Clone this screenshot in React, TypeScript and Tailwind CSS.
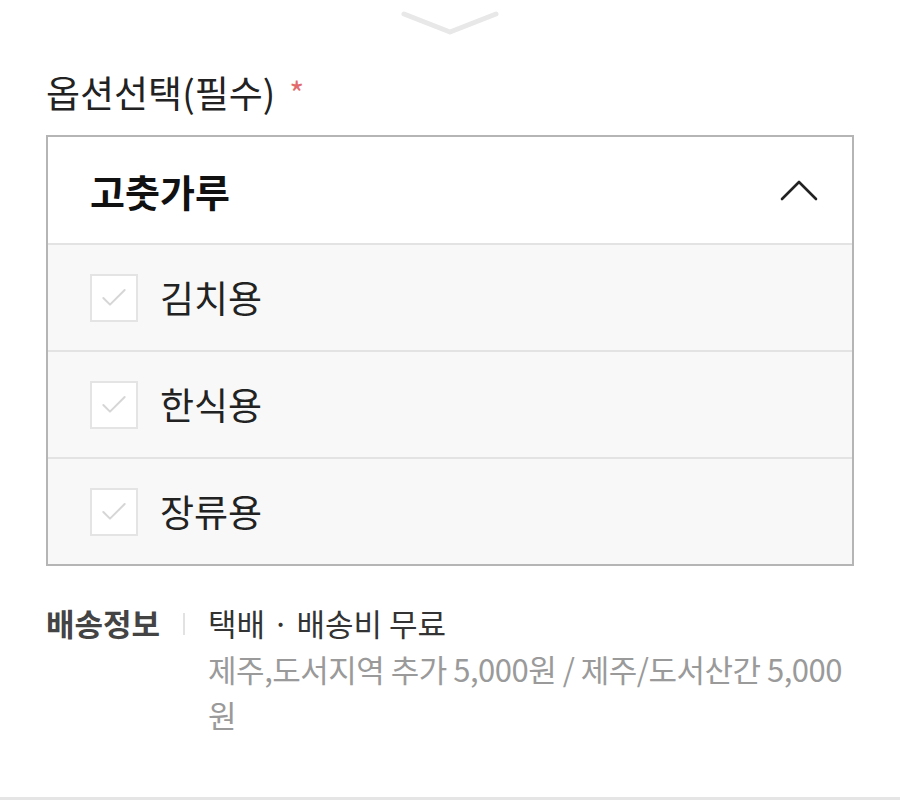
import { Check } from "lucide-react";

const options = ["김치용", "한식용", "장류용"];

export default function App() {
  return (
    <div
      className="relative h-[800px] w-[900px] overflow-hidden bg-white text-[#111]"
      style={{ fontFamily: '"Noto Sans CJK KR", "Noto Sans", sans-serif' }}
    >
      {/* drag handle */}
      <div className="flex h-[68px] justify-center pt-[8px]">
        <svg width="100" height="30" viewBox="0 0 100 30" fill="none">
          <path
            d="M4 6 L50 24 L96 6"
            stroke="#e8e8e8"
            strokeWidth="5"
            strokeLinecap="round"
            strokeLinejoin="round"
          />
        </svg>
      </div>

      <div className="px-[46px]">
        <div className="flex h-[48px] items-center text-[37px] leading-[48px] text-[#222]">
          옵션선택(필수)
          <span className="ml-[14px] text-[32px] text-[#e26a6a]">*</span>
        </div>

        <div className="mt-[19px] border-2 border-[#b5b5b5]">
          <div className="flex h-[106px] items-center justify-between pl-[42px] pr-[34px]">
            <span className="text-[38px] font-bold text-[#111]">고춧가루</span>
            <svg width="38" height="24" viewBox="0 0 38 24" fill="none">
              <path
                d="M2 21 L19 4 L36 21"
                stroke="#222"
                strokeWidth="2.6"
                strokeLinecap="round"
                strokeLinejoin="round"
              />
            </svg>
          </div>
          {options.map((o) => (
            <div
              key={o}
              className="flex h-[107px] items-center border-t-2 border-[#e3e3e3] bg-[#f8f8f8] pl-[42px]"
            >
              <span className="flex h-[48px] w-[48px] items-center justify-center border-2 border-[#e4e4e4] bg-white">
                <Check size={32} strokeWidth={1.5} className="text-[#d6d6d6]" />
              </span>
              <span className="ml-[22px] text-[37px] text-[#222]">{o}</span>
            </div>
          ))}
        </div>

        <div className="mt-[34px] flex text-[31px] leading-[46px]">
          <span className="font-bold text-[#444]">배송정보</span>
          <span className="mx-[23px] mt-[13px] h-[22px] w-[2px] bg-[#e2e2e2]" />
          <div className="flex-1">
            <div className="text-[#333]">택배 · 배송비 무료</div>
            <div className="tracking-[-0.5px] text-[#9a9a9a]">
              제주,도서지역 추가 5,000원 / 제주/도서산간 5,000 원
            </div>
          </div>
        </div>
      </div>

      <div className="absolute bottom-0 left-0 h-[3px] w-full bg-[#e5e5e5]" />
    </div>
  );
}
